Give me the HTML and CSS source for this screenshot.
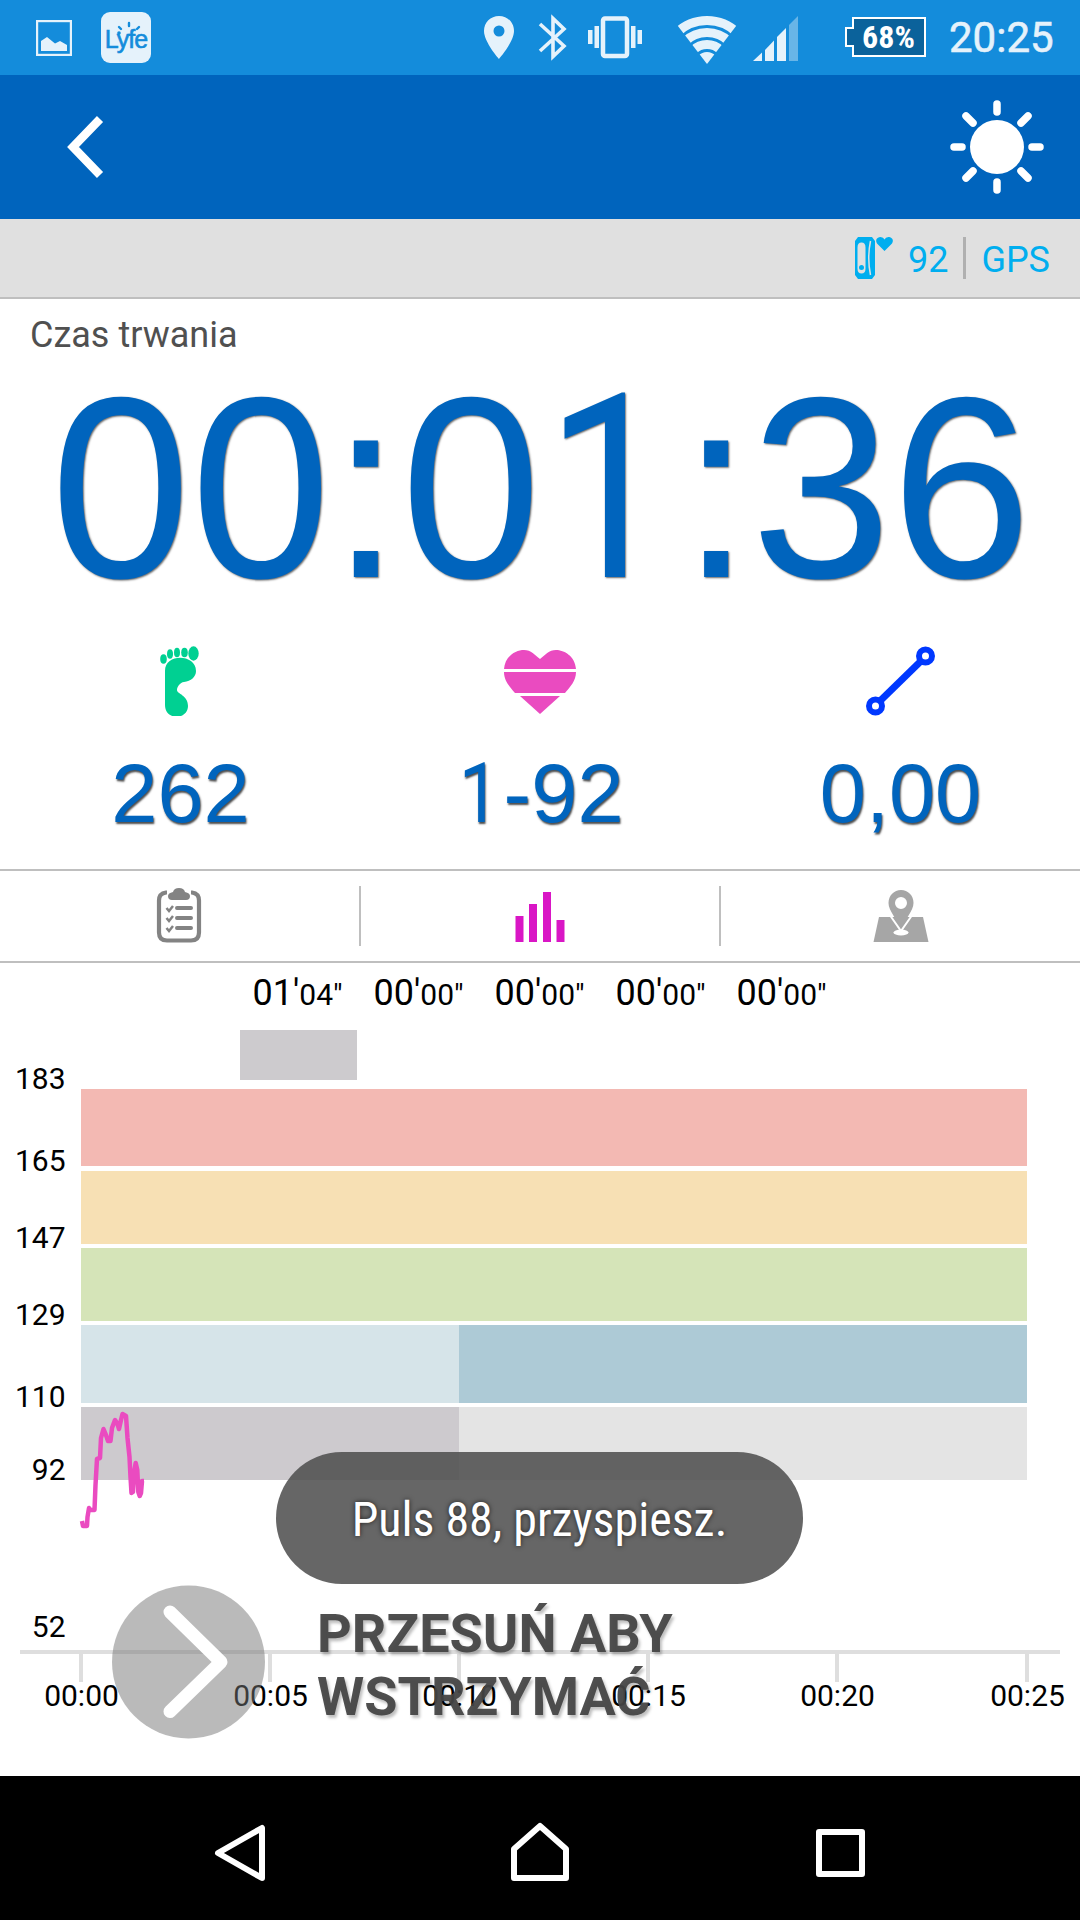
FILE: index.html
```html
<!DOCTYPE html>
<html lang="pl">
<head>
    <meta charset="UTF-8">
    <meta name="viewport" content="width=device-width, initial-scale=1.0">
    <title>Trening</title>
    <link rel="stylesheet" href="styles.css">
</head>
<body>
    <div class="screen">
        <div class="status-bar">
            <svg class="icon-image" width="36" height="36" viewBox="0 0 36 36">
                <rect x="1" y="1" width="34" height="34" fill="none" stroke="#e5f2fb" stroke-width="2.4"/>
                <path d="M5 31V21l6-4 8 6.500 5-2.500 7 4v6z" fill="#e5f2fb"/>
            </svg>
            <div class="lyfe">
                <span>Lyfe</span>
                <svg width="50" height="51" viewBox="0 0 50 51" fill="none" stroke="#148cdb" stroke-width="2.400" stroke-linecap="round">
                    <path d="M18 15l2 2M28 11v3M38 15l-2 2"/>
                    <circle cx="18" cy="21" r="1.800" fill="#148cdb" stroke="none"/>
                </svg>
            </div>
            <svg class="status-icons" width="460" height="75" viewBox="480 0 460 75">
                <g fill="#e5f2fb">
                    <path fill-rule="evenodd" d="M499 16c-8.500 0-15 6.500-15 15 0 11 15 28 15 28s15-17 15-28c0-8.500-6.500-15-15-15zm0 9.500a5.500 5.500 0 1 1 0 11 5.500 5.500 0 0 1 0-11z"/>
                    <rect x="588" y="30" width="4.500" height="14"/>
                    <rect x="594.500" y="26" width="4.500" height="22"/>
                    <rect x="631" y="26" width="4.500" height="22"/>
                    <rect x="637.500" y="30" width="4.500" height="14"/>
                    <path d="M753 61l9-8.500V61z"/>
                    <path d="M765 50l9-9.500V61h-9z"/>
                    <path d="M777 37l9-9V61h-9z"/>
                    <path d="M789 25l9-9V61h-9z" opacity=".4"/>
                </g>
                <path d="M540 24l24 22-11 10.500V18.500L564 29l-24 22" fill="none" stroke="#e5f2fb" stroke-width="3.600"/>
                <rect x="603" y="18.500" width="24" height="37.500" rx="2" fill="none" stroke="#e5f2fb" stroke-width="4.500"/>
                <clipPath id="wifi"><path d="M707 64L671 17V10h72v7z"/></clipPath>
                <g clip-path="url(#wifi)" fill="none" stroke="#e5f2fb">
                    <circle cx="707" cy="64" r="6" stroke-width="12"/>
                    <circle cx="707" cy="64" r="19.500" stroke-width="9"/>
                    <circle cx="707" cy="64" r="31.500" stroke-width="9"/>
                    <circle cx="707" cy="64" r="43.500" stroke-width="9"/>
                </g>
                <path d="M853 18h72v38h-72V46h-7V28h7z" fill="#0b629b" stroke="#fff" stroke-width="2"/>
                <text class="battery-text" x="888.500" y="48" text-anchor="middle">68%</text>
            </svg>
            <span class="clock">20:25</span>
        </div>

        <div class="header">
            <svg width="40" height="64" viewBox="0 0 40 64">
                <path d="M35 4L8 32l27 28" fill="none" stroke="#fff" stroke-width="8.500"/>
            </svg>
            <svg width="94" height="94" viewBox="-47 -47 94 94">
                <circle r="27" fill="#fff"/>
                <path d="M0-43v8M0 43v-8M-43 0h8M43 0h-8M-31-31l7 7M31-31l-7 7M-31 31l7-7M31 31l-7-7" stroke="#fff" stroke-width="7.500" stroke-linecap="round"/>
            </svg>
        </div>

        <div class="sensors">
            <svg width="39" height="42" viewBox="0 0 39 42" fill="#00aeef">
                <path fill-rule="evenodd" d="M4 0h14l3 4v34l-3 4H4l-3-4V4zM7.500 5.500q-4 0-4 5v21q0 5 4 5t4-5v-21q0-5-4-5z"/>
                <circle cx="7.500" cy="30.500" r="2.500"/>
                <path d="M16.500 4q-3.500 17 0 34" fill="none" stroke="#e0e0e0" stroke-width="1.500"/>
                <path d="M30.500 14L23 6.500C20.500 2 24 0 26.500 0q3 0 4 2.500Q31.500 0 34.500 0c2.500 0 6 2 3.500 6.500z"/>
            </svg>
            <span class="pulse">92</span>
            <span class="gps">GPS</span>
        </div>

        <div class="duration">
            <div class="label">Czas trwania</div>
            <div class="timer">00:0<span class="one">1</span>:36</div>
        </div>

        <div class="stats">
            <div class="stat">
                <svg width="72" height="72" viewBox="0 0 72 72" fill="#00d092">
                    <ellipse cx="19.500" cy="15" rx="3.300" ry="4.800"/>
                    <ellipse cx="26" cy="10" rx="3" ry="4.800"/>
                    <ellipse cx="33" cy="8.500" rx="3" ry="4.800"/>
                    <ellipse cx="40.500" cy="8.500" rx="3.300" ry="4.700"/>
                    <ellipse cx="49.500" cy="9.500" rx="5.200" ry="7.200"/>
                    <path d="M21 27C21 9 52 10 52 27c0 6-5 10-12 11-4 .5-7 5-7 8 0 4 11 5 11 16 0 14-23 15-23-1z"/>
                </svg>
                <div class="value">262</div>
            </div>
            <div class="stat">
                <svg width="72" height="72" viewBox="0 0 72 72" fill="#ea4bc0">
                    <path d="M0 25C1 12 12 6 20 6c7 0 11 5 16 9 5-4 9-9 16-9 8 0 19 6 20 19z"/>
                    <path d="M0 28h72c0 9-6 15-11 21H11C6 43 0 37 0 28z"/>
                    <path d="M16 52h40L36 70z"/>
                </svg>
                <div class="value"><span class="one">1</span>-92</div>
            </div>
            <div class="stat">
                <svg width="72" height="72" viewBox="0 0 72 72" fill="none" stroke="#0038ff">
                    <path d="M16 57L57 17" stroke-width="7"/>
                    <circle cx="61.500" cy="12" r="6.500" fill="#fff" stroke-width="6"/>
                    <circle cx="11.500" cy="62" r="6.500" fill="#fff" stroke-width="6"/>
                </svg>
                <div class="value">0,00</div>
            </div>
        </div>

        <div class="tabs">
            <div class="tab">
                <svg width="60" height="60" viewBox="0 0 60 60">
                    <g fill="none" stroke="#838383" stroke-width="4.200">
                        <path d="M18 6.500h-1q-7 1-7 8v32q0 8 8 8h24q8 0 8-8v-32q0-7-7-8h-1"/>
                        <path d="M28 22h14M28 32h14M28 42h14" stroke-linecap="round" stroke-width="4"/>
                        <path d="M17.500 22l2.500 3 4-5M17.500 32l2.500 3 4-5M17.500 42l2.500 3 4-5" stroke-width="2.500"/>
                    </g>
                    <path d="M19 10q0-3 5-4 1-4 6-4t6 4q5 1 5 4 0 4-4 4H23q-4 0-4-4z" fill="#838383"/>
                </svg>
            </div>
            <div class="tab">
                <svg width="60" height="60" viewBox="0 0 60 60" fill="#d916c5">
                    <rect x="5.500" y="30" width="8" height="26"/>
                    <rect x="19" y="18" width="8" height="38"/>
                    <rect x="33" y="6" width="8" height="50"/>
                    <rect x="46.500" y="34" width="8" height="22"/>
                </svg>
            </div>
            <div class="tab">
                <svg width="60" height="60" viewBox="0 0 60 60">
                    <path d="M8 31h44l5.500 25h-55z" fill="#a6a6a6"/>
                    <ellipse cx="30" cy="46.500" rx="7.500" ry="3" fill="#fff"/>
                    <path fill-rule="evenodd" d="M30 4c-7 0-12.500 5.500-12.500 13S26 34 30 42c4-8 12.500-17.500 12.500-25S37 4 30 4zm0 7a6 6 0 1 1 0 12 6 6 0 0 1 0-12z" fill="#a6a6a6"/>
                    <path d="M19.500 30L30 45l10.500-15" fill="none" stroke="#fff" stroke-width="2"/>
                </svg>
            </div>
        </div>

        <div class="zones">
            <div class="zone"><span>01'<small>04"</small></span><div class="zone-bar"></div></div>
            <div class="zone"><span>00'<small>00"</small></span></div>
            <div class="zone"><span>00'<small>00"</small></span></div>
            <div class="zone"><span>00'<small>00"</small></span></div>
            <div class="zone"><span>00'<small>00"</small></span></div>
        </div>

        <svg class="chart" width="1080" height="696" viewBox="0 0 1080 696">
            <!-- heart rate zones -->
            <g shape-rendering="crispEdges">
                <rect x="81" y="9" width="946" height="77" fill="#f3b9b3"/>
                <rect x="81" y="91" width="946" height="73" fill="#f7e0b4"/>
                <rect x="81" y="168" width="946" height="73" fill="#d5e4b8"/>
                <rect x="81" y="245" width="378" height="78" fill="#d6e4e9"/>
                <rect x="459" y="245" width="568" height="78" fill="#adcad6"/>
                <rect x="81" y="327" width="378" height="73" fill="#cdcace"/>
                <rect x="459" y="327" width="568" height="73" fill="#e4e4e4"/>
                <path d="M20 572h1040M81 574v28M270 574v28M459 574v28M648 574v28M837 574v28M1027 574v28" stroke="#dedede" stroke-width="4"/>
            </g>
            <g text-anchor="end">
                <text x="65.500" y="9">183</text>
                <text x="65.500" y="91">165</text>
                <text x="65.500" y="168">147</text>
                <text x="65.500" y="245">129</text>
                <text x="65.500" y="327">110</text>
                <text x="65.500" y="400">92</text>
                <text x="65.500" y="557">52</text>
            </g>
            <g text-anchor="middle">
                <text x="81.500" y="626">00:00</text>
                <text x="270.500" y="626">00:05</text>
                <text x="459.500" y="626">00:10</text>
                <text x="648.500" y="626">00:15</text>
                <text x="837.500" y="626">00:20</text>
                <text x="1027.500" y="626">00:25</text>
            </g>
            <polyline class="pulse-line" points="82,441 83,446 87,446 87.500,437 89,428 90.500,430 94.500,430 95.500,405 97,379 100,378 101,358 103.500,349 106,355 108,361 110.500,361 112,348 115,340 117.500,344 119,349 121,340 122.500,334 126,336 127.500,358 129.500,377 130.500,397 131.500,413 133,412 134,393 135.700,383 137.300,390 138.300,412 139.700,416 141,413 142,401 144,401"/>
        </svg>

        <div class="slider">
            <svg width="154" height="154" viewBox="0 0 154 154">
                <circle cx="76.500" cy="77" r="76.500" fill="rgba(117,117,117,.5)"/>
                <path d="M58 27l51 50-51 49.500" fill="none" stroke="#fff" stroke-width="13" stroke-linecap="round" stroke-linejoin="round"/>
            </svg>
            <div class="slider-text">PRZESUŃ ABY<br>WSTRZYMAĆ</div>
        </div>

        <div class="toast"><span>Puls 88, przyspiesz.</span></div>

        <div class="nav-bar">
            <svg width="60" height="64" viewBox="0 0 60 64"><path d="M52 7v50L8 32z"/></svg>
            <svg width="60" height="64" viewBox="0 0 60 64"><path d="M4 57V28L30 5l26 23v29z"/></svg>
            <svg width="60" height="64" viewBox="0 0 60 64"><path d="M9 11h43v42H9z"/></svg>
        </div>
    </div>
</body>
</html>
```

FILE: styles.css
```css
body {
    margin: 0;
    font-family: Roboto, "Noto Sans", sans-serif;
    background-color: #fff;
}
svg {
    display: block;
}
.screen {
    position: relative;
    width: 1080px;
    height: 1920px;
    overflow: hidden;
}
.status-bar {
    display: flex;
    align-items: center;
    height: 75px;
    padding-left: 36px;
    background-color: #148cdb;
    color: #e5f2fb;
}
.lyfe {
    position: relative;
    width: 50px;
    height: 51px;
    margin-left: 29px;
    border-radius: 9px;
    background-color: #e5f2fb;
    color: #148cdb;
    font: 25px/54px "Liberation Sans", sans-serif;
    letter-spacing: -1px;
    text-align: center;
    -webkit-text-stroke: 0.6px #148cdb;
}
.lyfe svg {
    position: absolute;
    left: 0;
    top: 0;
}
.status-icons {
    margin-left: 329px;
}
.battery-text {
    font-family: "Roboto Condensed", Roboto, sans-serif;
    font-size: 32px;
    font-stretch: condensed;
    font-weight: bold;
    fill: #fff;
}
.clock {
    margin-left: 9px;
    font-size: 42px;
    line-height: 81px;
    -webkit-text-stroke: 0.6px #e5f2fb;
}
.header {
    display: flex;
    align-items: center;
    justify-content: space-between;
    height: 144px;
    padding: 0 36px 0 65px;
    background-color: #0064bd;
}
.sensors {
    display: flex;
    align-items: center;
    justify-content: flex-end;
    height: 78px;
    padding-right: 30px;
    border-bottom: 2px solid #bfbfbf;
    background-color: #e0e0e0;
    color: #00aeef;
    font-size: 36px;
    line-height: 46px;
}
.pulse {
    height: 42px;
    margin-left: 15px;
    padding-right: 15px;
    border-right: 3px solid #b0b0b0;
}
.gps {
    height: 42px;
    margin-left: 15px;
}
.label {
    padding: 14px 30px 0;
    color: #505050;
    font-size: 36px;
    line-height: 44px;
}
.duration {
    height: 345px;
}
.timer, .value {
    color: #0064bd;
    font-family: "Liberation Sans", Arial, sans-serif;
    text-align: center;
    white-space: nowrap;
}
.timer {
    margin-top: 33px;
    font-size: 252px;
    line-height: 200px;
    text-indent: 2px;
    text-shadow: 1px 1px 2px rgba(0, 0, 0, 0.6);
    transform: scaleY(1.025);
    transform-origin: 0 92%;
}
.one {
    display: inline-block;
    width: 0.556em;
    line-height: 0.7;
    font-family: Roboto, sans-serif;
    text-indent: 0;
    text-align: left;
    transform: scaleX(0.88);
    transform-origin: 30% 0;
}
.stats {
    display: flex;
    height: 225px;
    border-bottom: 2px solid #bfbfbf;
}
.stat {
    flex: 1;
    display: flex;
    flex-direction: column;
    align-items: center;
}
.value {
    margin-top: 28px;
    font-size: 83px;
    line-height: 100px;
    text-indent: 1px;
    text-shadow: 1px 2px 2px rgba(0, 0, 0, 0.7);
}
.tabs {
    display: flex;
    align-items: center;
    height: 90px;
    border-bottom: 2px solid #bfbfbf;
}
.tab {
    flex: 1;
    display: flex;
    justify-content: center;
}
.tab:not(:last-child) {
    border-right: 2px solid #bfbfbf;
}
.zones {
    display: flex;
    height: 117px;
    padding-left: 240px;
}
.zone {
    width: 121px;
    text-indent: 12.5px;
    font-size: 36px;
    line-height: 60px;
    white-space: nowrap;
}
.zone small {
    font-size: 30px;
}
.zone-bar {
    width: 117px;
    height: 50px;
    margin-top: 5px;
    background-color: #cdcbce;
}
.chart {
    overflow: visible;
    font-size: 30px;
}
.pulse-line {
    fill: none;
    stroke: #ea4bc0;
    stroke-width: 4.5;
    stroke-linejoin: round;
}
.slider {
    position: absolute;
    left: 112px;
    top: 1585px;
    display: flex;
    gap: 51px;
}
.slider-text {
    padding-top: 17px;
    color: rgba(68, 68, 68, 0.94);
    font-size: 54px;
    font-weight: bold;
    line-height: 63px;
    text-shadow: 2px 3px 3px rgba(0, 0, 0, 0.25);
}
.toast {
    position: absolute;
    left: 276px;
    top: 1452px;
    display: flex;
    justify-content: center;
    width: 527px;
    height: 132px;
    border-radius: 66px;
    background-color: rgba(77, 77, 77, 0.86);
    color: #fff;
    font-family: "Roboto Condensed", Roboto, sans-serif;
    font-size: 48px;
    font-stretch: condensed;
    line-height: 136px;
    white-space: nowrap;
    text-shadow: 0 0 5px rgba(0, 0, 0, 0.7);
}
.nav-bar {
    display: flex;
    justify-content: center;
    gap: 240px;
    height: 99px;
    padding-top: 45px;
    background-color: #000;
}
.nav-bar svg {
    fill: none;
    stroke: #fff;
    stroke-width: 6;
    stroke-linejoin: round;
}
```
